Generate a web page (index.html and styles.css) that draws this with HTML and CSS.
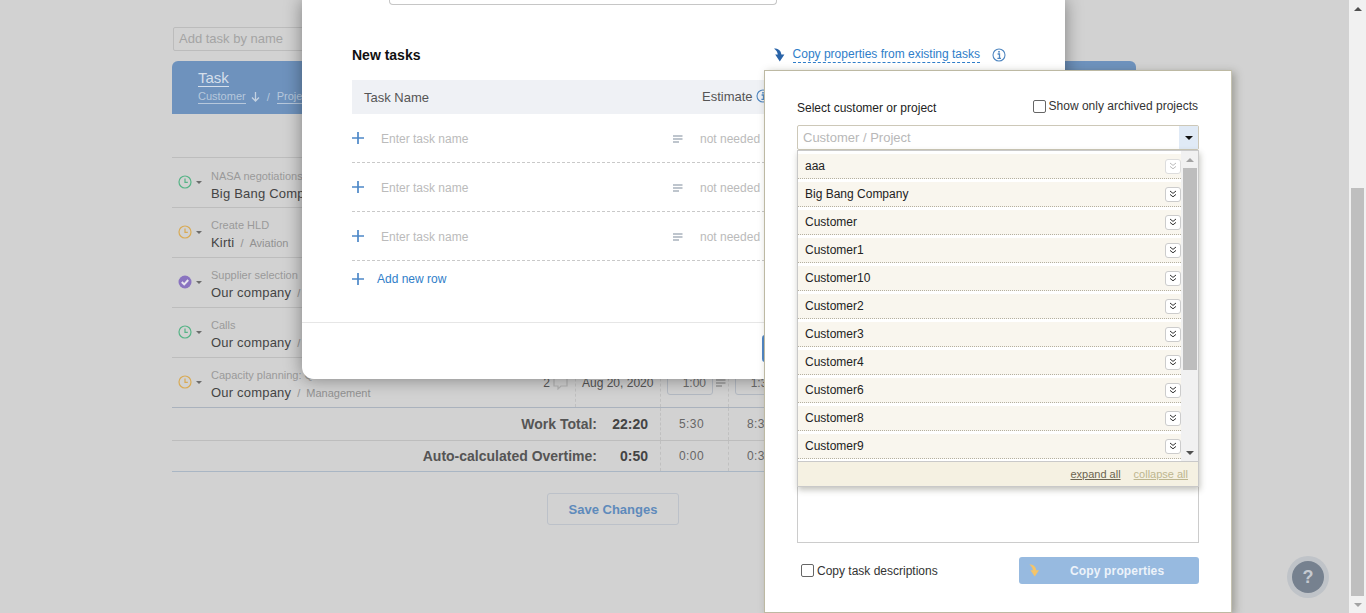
FILE: index.html
```html
<!DOCTYPE html>
<html lang="en">
<head>
<meta charset="utf-8">
<title>Timesheet</title>
<link rel="stylesheet" href="styles.css">
</head>
<body>
<svg class="defs" width="0" height="0" aria-hidden="true">
  <symbol id="clock" viewBox="0 0 14 14"><circle cx="7" cy="7" r="6" fill="none" stroke="currentColor" stroke-width="1.2"/><path d="M7 3.6V7.4H9.8" fill="none" stroke="currentColor" stroke-width="1.2"/></symbol>
  <symbol id="lines" viewBox="0 0 10 8"><path d="M0 1H9.5M0 4H9.5M0 7H6" fill="none" stroke="currentColor" stroke-width="1.4"/></symbol>
  <symbol id="plus" viewBox="0 0 12 12"><path d="M6 0V12M0 6H12" fill="none" stroke="currentColor" stroke-width="1.7"/></symbol>
  <symbol id="chev" viewBox="0 0 8 8"><path d="M1 1L4 3.4L7 1M1 4.4L4 6.8L7 4.4" fill="none" stroke="currentColor" stroke-width="1"/></symbol>
  <symbol id="info" viewBox="0 0 14 14"><circle cx="7" cy="7" r="6" fill="none" stroke="currentColor" stroke-width="1.1"/><path d="M5.6 6H7.5V10.2M5.4 10.4H9" fill="none" stroke="currentColor" stroke-width="1.3"/><rect x="6.2" y="3" width="1.6" height="1.6" fill="currentColor"/></symbol>
  <symbol id="turn" viewBox="0 0 12 14"><path d="M1 .5C5 .5 8 2.4 8.4 6.6L11.4 6.6L6.8 13.5L2.2 6.6L4.8 6.6C4.6 4.2 3.4 2.4 1 .5Z" fill="currentColor"/></symbol>
  <symbol id="down" viewBox="0 0 9 10"><path d="M4.5 0V9M1 5.5L4.5 9L8 5.5" fill="none" stroke="currentColor" stroke-width="1.3"/></symbol>
</svg>

<div class="app">
  <main class="page">
    <div class="add-task"><span>Add task by name</span></div>
    <div class="table-head">
      <div class="head-title">Task</div>
      <div class="head-sub"><span class="head-link">Customer</span><svg class="head-arrow"><use href="#down"/></svg><span class="head-sep">/</span><span class="head-link">Project</span></div>
    </div>

    <div class="rows">
      <div class="row">
        <div class="task-cell">
          <svg class="st st-green"><use href="#clock"/></svg><i class="caret"></i>
          <div class="task-text"><div class="task-name">NASA negotiations</div><div class="task-owner">Big Bang Company</div></div>
        </div>
      </div>
      <div class="row">
        <div class="task-cell">
          <svg class="st st-amber"><use href="#clock"/></svg><i class="caret"></i>
          <div class="task-text"><div class="task-name">Create HLD</div><div class="task-owner">Kirti<span class="task-proj"><b>/</b>Aviation</span></div></div>
        </div>
      </div>
      <div class="row">
        <div class="task-cell">
          <svg class="st" viewBox="0 0 14 14"><circle cx="7" cy="7" r="6.5" fill="#8a74c0"/><path d="M3.8 7L6.2 9.4L10.2 5" fill="none" stroke="#e8e6ef" stroke-width="2"/></svg><i class="caret"></i>
          <div class="task-text"><div class="task-name">Supplier selection</div><div class="task-owner">Our company<span class="task-proj"><b>/</b>Management</span></div></div>
        </div>
      </div>
      <div class="row">
        <div class="task-cell">
          <svg class="st st-green"><use href="#clock"/></svg><i class="caret"></i>
          <div class="task-text"><div class="task-name">Calls</div><div class="task-owner">Our company<span class="task-proj"><b>/</b>Management</span></div></div>
        </div>
      </div>
      <div class="row">
        <div class="task-cell">
          <svg class="st st-amber"><use href="#clock"/></svg><i class="caret"></i>
          <div class="task-text"><div class="task-name">Capacity planning: Q3</div><div class="task-owner">Our company<span class="task-proj"><b>/</b>Management</span></div></div>
          <div class="comments">2<svg class="bubble" viewBox="0 0 15 14"><path d="M1 1H14V10H8L5 13V10H1Z" fill="none" stroke="#b3b3b3" stroke-width="1.2"/></svg></div>
        </div>
        <div class="date-cell">Aug 20, 2020</div>
        <div class="hour-cell"><span class="hour-box">1:00</span><svg class="note"><use href="#lines"/></svg></div>
        <div class="hour-cell"><span class="hour-box">1:30</span></div>
      </div>
    </div>

    <div class="total total-work">
      <div class="total-label">Work Total:<span class="total-sum">22:20</span></div>
      <div class="total-val">5:30</div>
      <div class="total-val">8:30</div>
    </div>
    <div class="total total-over">
      <div class="total-label">Auto-calculated Overtime:<span class="total-sum">0:50</span></div>
      <div class="total-val">0:00</div>
      <div class="total-val">0:30</div>
    </div>
    <button class="save">Save Changes</button>
  </main>

  <aside class="scrollbar">
    <div class="sb-btn"><i class="tri-up"></i></div>
    <div class="sb-track"><div class="sb-thumb"></div></div>
    <div class="sb-btn"><i class="tri-down sb-faded"></i></div>
  </aside>
</div>

<section class="modal">
  <div class="modal-stub"></div>
  <div class="modal-titlebar">
    <h2 class="modal-title">New tasks</h2>
    <div class="copy-block">
      <svg class="turn"><use href="#turn"/></svg>
      <span class="copy-link">Copy properties from existing tasks</span>
      <svg class="info-lg"><use href="#info"/></svg>
    </div>
  </div>
  <div class="nt-head"><span class="nt-name">Task Name</span><span class="nt-est">Estimate</span><svg class="info-sm"><use href="#info"/></svg></div>
  <div class="nt-row"><svg class="plus"><use href="#plus"/></svg><span class="nt-input">Enter task name</span><svg class="nt-lines"><use href="#lines"/></svg><span class="nt-needed">not needed</span></div>
  <div class="nt-row"><svg class="plus"><use href="#plus"/></svg><span class="nt-input">Enter task name</span><svg class="nt-lines"><use href="#lines"/></svg><span class="nt-needed">not needed</span></div>
  <div class="nt-row"><svg class="plus"><use href="#plus"/></svg><span class="nt-input">Enter task name</span><svg class="nt-lines"><use href="#lines"/></svg><span class="nt-needed">not needed</span></div>
  <div class="nt-add"><svg class="plus"><use href="#plus"/></svg><span class="nt-add-text">Add new row</span></div>
  <div class="modal-foot"><button class="modal-btn">Add</button></div>
</section>

<section class="popup">
  <div class="pop-top">
    <span class="pop-label">Select customer or project</span>
    <label class="check check-arch"><i class="box"></i>Show only archived projects</label>
  </div>
  <div class="combo"><span class="combo-text">Customer / Project</span><span class="combo-btn"><i class="tri-down tri-black"></i></span></div>
  <div class="tree-wrap">
    <div class="tree-box"></div>
    <div class="dropdown">
      <div class="dd-body">
        <ul class="dd-list">
          <li class="dd-item"><span>aaa</span><span class="exp exp-off"><svg><use href="#chev"/></svg></span></li>
          <li class="dd-item"><span>Big Bang Company</span><span class="exp"><svg><use href="#chev"/></svg></span></li>
          <li class="dd-item"><span>Customer</span><span class="exp"><svg><use href="#chev"/></svg></span></li>
          <li class="dd-item"><span>Customer1</span><span class="exp"><svg><use href="#chev"/></svg></span></li>
          <li class="dd-item"><span>Customer10</span><span class="exp"><svg><use href="#chev"/></svg></span></li>
          <li class="dd-item"><span>Customer2</span><span class="exp"><svg><use href="#chev"/></svg></span></li>
          <li class="dd-item"><span>Customer3</span><span class="exp"><svg><use href="#chev"/></svg></span></li>
          <li class="dd-item"><span>Customer4</span><span class="exp"><svg><use href="#chev"/></svg></span></li>
          <li class="dd-item"><span>Customer6</span><span class="exp"><svg><use href="#chev"/></svg></span></li>
          <li class="dd-item"><span>Customer8</span><span class="exp"><svg><use href="#chev"/></svg></span></li>
          <li class="dd-item"><span>Customer9</span><span class="exp"><svg><use href="#chev"/></svg></span></li>
        </ul>
        <div class="dd-scroll">
          <div class="dd-arrow"><i class="tri-up tri-gray"></i></div>
          <div class="dd-thumb"></div>
          <div class="dd-arrow dd-arrow-end"><i class="tri-down"></i></div>
        </div>
      </div>
      <div class="dd-foot"><span class="dd-expand">expand all</span><span class="dd-collapse">collapse all</span></div>
    </div>
  </div>
  <div class="pop-bottom">
    <label class="check check-desc"><i class="box"></i>Copy task descriptions</label>
    <button class="copy-btn"><svg class="turn-sm"><use href="#turn"/></svg><span>Copy properties</span></button>
  </div>
</section>

<div class="help"><span class="help-inner">?</span></div>
</body>
</html>
```

FILE: styles.css
```css
* { box-sizing: border-box; }
html, body { margin: 0; height: 613px; overflow: hidden; }
body { font-family: "Liberation Sans", Arial, sans-serif; font-size: 12px; color: #333; background: #d2d2d2; }
.defs { position: absolute; }
button { font-family: inherit; }
ul { margin: 0; padding: 0; list-style: none; }

.app { display: flex; height: 613px; }
.page { flex: 1; padding: 27px 0 0 172px; min-width: 0; }

.add-task { width: 200px; height: 24px; margin-left: 1px; border: 1px solid #bcbcbc; border-radius: 2px; padding: 0 5px; font-size: 13px; line-height: 22px; color: #a4a4a4; }

.table-head { width: 964px; height: 53px; margin-top: 10px; padding: 8px 0 0 26px; background: #6e92bd; border-radius: 6px 6px 0 0; color: #d5dfeb; }
.head-title { display: inline-block; font-size: 15px; line-height: 17px; height: 18px; border-bottom: 1px solid #d5dfeb; }
.head-sub { display: flex; align-items: center; margin-top: 3px; font-size: 11px; line-height: 13px; color: #b7c8dc; }
.head-link { border-bottom: 1px solid #b7c8dc; }
.head-arrow { width: 9px; height: 10px; margin: 0 6px 0 5px; color: #c4d2e2; flex: none; }
.head-sep { margin: 0 7px 0 1px; }

.rows { width: 964px; margin-top: 43px; }
.row { display: grid; grid-template-columns: 403px 85px 68px 68px; height: 50px; border-top: 1px solid #bdbdbd; }
.task-cell { display: flex; align-items: center; padding-left: 6px; }
.st { width: 14px; height: 14px; flex: none; margin-bottom: 1px; }
.st-green { color: #57b487; }
.st-amber { color: #d9ab55; }
.caret { width: 0; height: 0; margin: 0 9px 0 4px; border: 3px solid transparent; border-top-color: #6c6c6c; border-bottom-width: 0; flex: none; }
.task-text { flex: 1; white-space: nowrap; padding-top: 7px; }
.task-name { font-size: 11px; line-height: 14px; color: #9a9a9a; }
.task-owner { font-size: 13px; line-height: 21px; color: #444; letter-spacing: .2px; }
.task-proj { font-size: 11px; color: #919191; letter-spacing: 0; }
.task-proj b { font-weight: 400; margin: 0 6px; }
.comments { display: flex; align-items: center; gap: 3px; margin-right: 7px; font-size: 12px; color: #555; }
.bubble { width: 15px; height: 14px; }
.date-cell { display: flex; align-items: center; padding-left: 6px; font-size: 12px; color: #555; border-left: 1px dashed #c0c0c0; }
.hour-cell { display: flex; align-items: center; padding-left: 6px; border-left: 1px dashed #c0c0c0; }
.hour-box { width: 46px; height: 24px; border: 1px solid #b3b9c2; border-radius: 3px; text-align: right; padding-right: 6px; line-height: 22px; font-size: 12px; color: #6b6b6b; }
.note { width: 10px; height: 8px; margin-left: 3px; color: #9a9a9a; }

.total { display: grid; grid-template-columns: 488px 68px 68px; width: 964px; border-top: 1px solid #bdbdbd; align-items: stretch; }
.total-work { height: 33px; border-top-color: #aab2bd; }
.total-over { height: 32px; border-bottom: 1px solid #a9b6c4; }
.total-label { display: flex; align-items: center; justify-content: flex-end; padding-right: 12px; font-size: 14px; font-weight: 700; color: #555; }
.total-sum { width: 51px; text-align: right; color: #444; }
.total-val { display: flex; align-items: center; padding-left: 18px; font-size: 12px; color: #666; letter-spacing: .4px; border-left: 1px dashed #c0c0c0; }
.save { display: block; width: 132px; height: 32px; margin: 21px 0 0 375px; padding: 0; background: transparent; border: 1px solid #bcc1c9; border-radius: 3px; font-size: 13px; font-weight: 700; color: #5e8abb; }

.scrollbar { display: flex; flex-direction: column; width: 17px; flex: none; background: #f1f1f1; }
.sb-btn { display: flex; align-items: center; justify-content: center; height: 17px; }
.sb-track { flex: 1; padding: 171px 2px 0; display: flex; }
.sb-thumb { flex: 1; background: #bfbfbf; }
.tri-up, .tri-down { display: block; width: 0; height: 0; border: 4px solid transparent; }
.tri-up { border-top-width: 0; border-bottom-color: #505050; }
.tri-down { border-bottom-width: 0; border-top-color: #505050; }
.sb-faded { border-top-color: #a3a3a3; }

.modal { position: absolute; left: 302px; top: 0; width: 763px; height: 379px; padding: 0 50px; background: #fff; border-radius: 0 0 12px 12px; box-shadow: 0 0 18px rgba(0,0,0,.4); }
.modal-stub { width: 388px; height: 5px; margin-left: 37px; border: 1px solid #c6c6c6; border-top: 0; border-radius: 0 0 4px 4px; }
.modal-titlebar { display: flex; align-items: center; justify-content: space-between; height: 30px; margin-top: 35px; padding-right: 9px; }
.modal-title { margin: 0; font-size: 14px; font-weight: 700; color: #111; }
.copy-block { display: flex; align-items: center; }
.turn { width: 12px; height: 14px; color: #2a64a8; margin-right: 8px; }
.copy-link { font-size: 12px; line-height: 15px; color: #2f7ec9; border-bottom: 1px dashed #2f7ec9; }
.info-lg { width: 14px; height: 14px; margin-left: 12px; color: #4f86c0; }
.nt-head { display: flex; align-items: center; height: 34px; margin-top: 10px; padding-left: 12px; background: #eff1f5; font-size: 13px; color: #555; }
.nt-name { width: 338px; }
.nt-est { margin: 0 3px 2px 0; }
.info-sm { width: 14px; height: 14px; margin-bottom: 2px; color: #4f86c0; }
.nt-row { display: flex; align-items: center; height: 49px; border-bottom: 1px dashed #c9c9c9; }
.plus { width: 12px; height: 12px; flex: none; color: #4d88c8; }
.nt-input { width: 292px; margin: 2px 0 0 17px; font-size: 12px; color: #bbb; }
.nt-lines { width: 10px; height: 8px; margin-top: 1px; color: #a9b2bd; flex: none; }
.nt-needed { margin: 2px 0 0 17px; font-size: 12px; color: #bbb; white-space: nowrap; }
.nt-add { display: flex; align-items: center; height: 36px; }
.nt-add-text { margin-left: 13px; font-size: 12px; color: #2f7ec9; }
.modal-foot { display: flex; margin: 25px -50px 0; height: 57px; border-top: 1px solid #e6e6e6; padding: 12px 0 0 460px; }
.modal-btn { width: 120px; height: 27px; border: 0; border-radius: 3px; background: #4f86c6; color: #fff; font-size: 13px; }

.popup { position: absolute; left: 764px; top: 70px; width: 468px; height: 543px; padding: 0 32px 0 32px; background: #fff; border: 1px solid #bdb9a3; border-right-color: #c6c3b0; box-shadow: 3px 2px 8px rgba(60,60,40,.35); }
.pop-top { display: flex; justify-content: space-between; height: 54px; padding-top: 28px; }
.pop-label { padding-top: 1px; font-size: 12px; color: #222; line-height: 16px; }
.check { display: flex; align-items: center; font-size: 12px; color: #333; }
.box { display: block; width: 13px; height: 13px; border: 1px solid #666; border-radius: 2px; background: #fff; flex: none; }
.check-arch { height: 14px; margin-right: 1px; gap: 3px; }
.combo { display: flex; height: 25px; border: 1px solid #cdc8b8; border-radius: 2px; }
.combo-text { flex: 1; padding-left: 5px; font-size: 13px; line-height: 23px; color: #b8b8b8; }
.combo-btn { display: flex; align-items: center; justify-content: center; width: 19px; background: #e0eaf6; }
.tri-black { border-top-color: #111; }

.tree-wrap { position: relative; height: 393px; }
.tree-box { height: 393px; border: 1px solid #ccc; border-top: 0; }
.dropdown { position: absolute; left: 0; right: 0; top: 0; height: 337px; background: #fff; border: 1px solid #c9c9c9; box-shadow: 1px 3px 6px rgba(60,60,40,.3); }
.dd-body { display: flex; height: 310px; overflow: hidden; }
.dd-list { width: 383px; flex: none; }
.dd-item { display: flex; align-items: center; justify-content: space-between; height: 25px; margin-top: 3px; padding-left: 7px; background: #f9f6ee; border-bottom: 1px dotted #b5b0a0; font-size: 12px; color: #222; }
.exp { display: flex; align-items: center; justify-content: center; width: 16px; height: 15px; background: #fff; border: 1px solid #ccc; border-radius: 3px; color: #333; }
.exp svg { width: 8px; height: 8px; }
.exp-off { color: #bbb; border-color: #ddd; }
.dd-scroll { position: relative; flex: 1; background: #f1f1f1; padding: 0 1px 0 2px; }
.dd-arrow { display: flex; justify-content: center; align-items: center; height: 17px; }
.dd-arrow-end { position: absolute; left: 0; right: 0; bottom: 0; }
.tri-gray { border-bottom-color: #a3a3a3; }
.dd-thumb { height: 202px; background: #bdbdbd; }
.dd-foot { display: flex; justify-content: flex-end; align-items: center; gap: 13px; height: 25px; padding-right: 10px; background: #f5f1e2; border-top: 1px solid #c9c9c9; font-size: 11px; }
.dd-expand { color: #6c6450; text-decoration: underline; }
.dd-collapse { color: #bdb68f; text-decoration: underline; }

.pop-bottom { display: flex; align-items: center; justify-content: space-between; margin-top: 14px; }
.check-desc { margin-left: 4px; gap: 3px; }
.copy-btn { display: flex; align-items: center; width: 180px; height: 27px; padding: 0 0 0 9px; border: 0; border-radius: 3px; background: #97bae0; color: #edf3fa; font-size: 12px; font-weight: 700; letter-spacing: .15px; }
.turn-sm { width: 12px; height: 13px; color: #f4c468; flex: none; }
.copy-btn span { margin-left: 30px; }

.help { position: absolute; left: 1287px; top: 556px; display: flex; align-items: center; justify-content: center; width: 42px; height: 42px; border-radius: 50%; background: #bfc3c8; }
.help-inner { display: block; width: 32px; height: 32px; border-radius: 50%; background: #76818f; color: #c5cad1; font-size: 18px; font-weight: 700; line-height: 32px; text-align: center; }
```
